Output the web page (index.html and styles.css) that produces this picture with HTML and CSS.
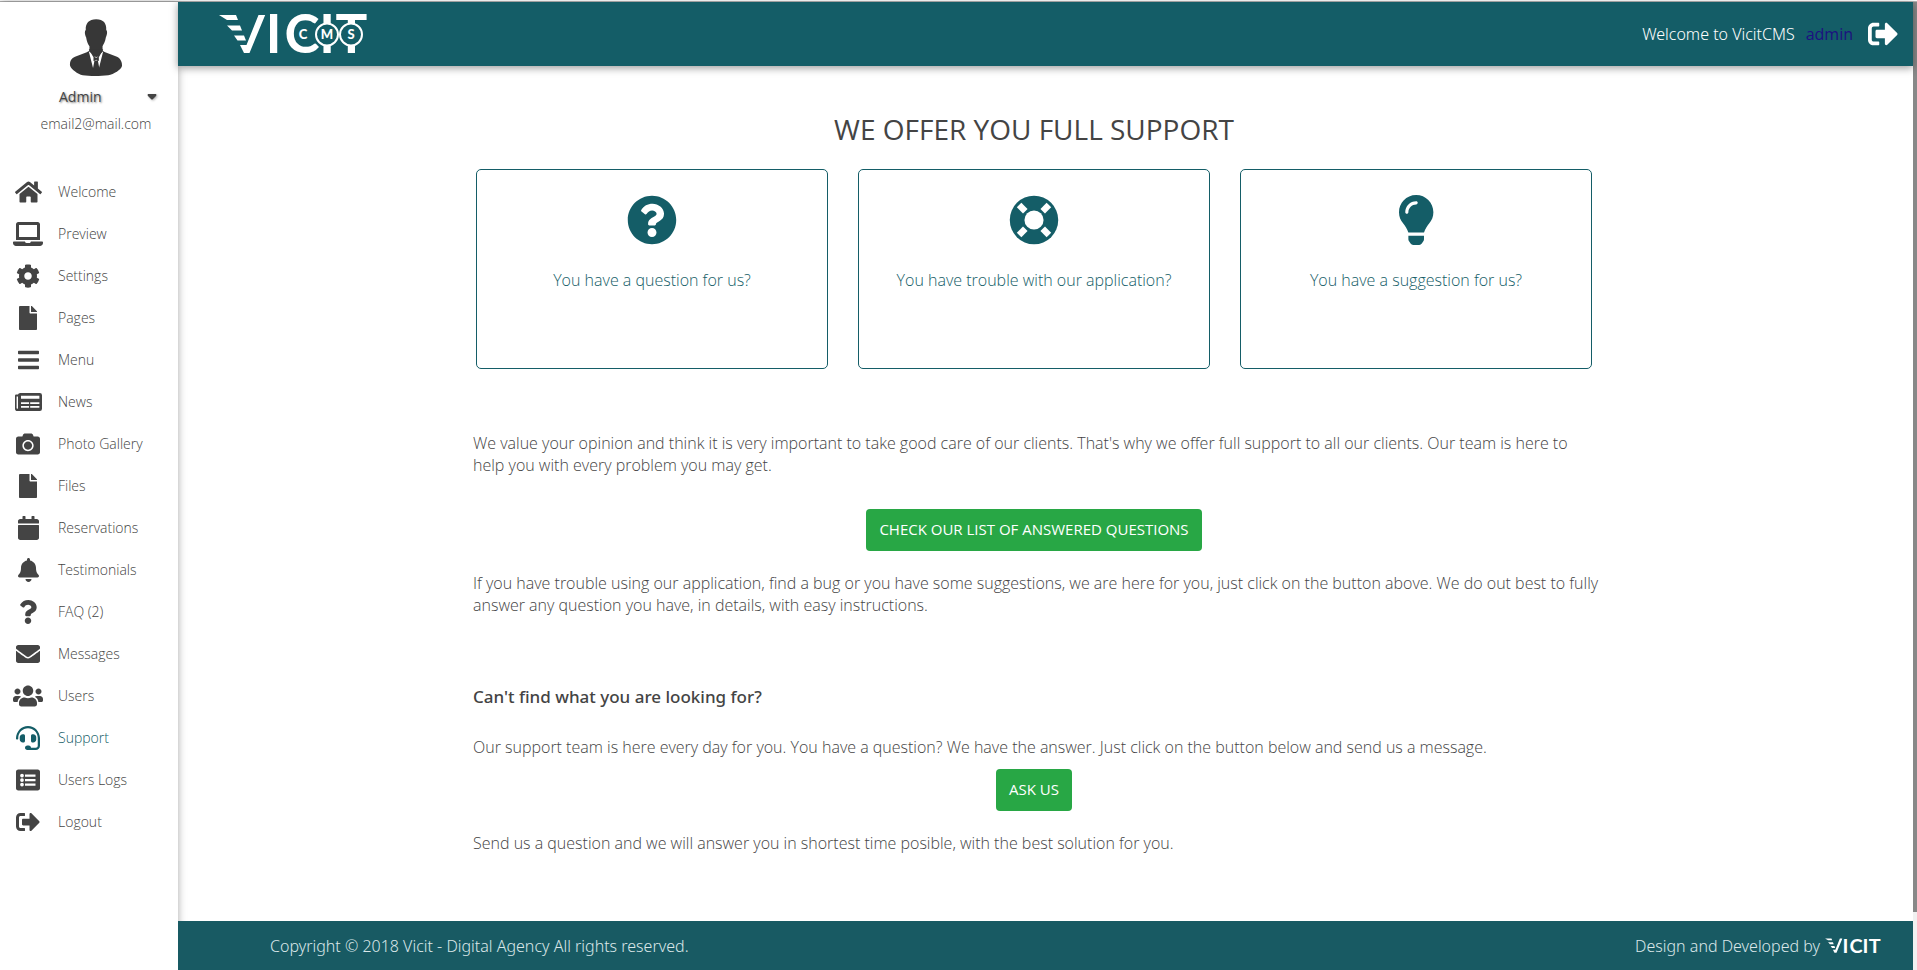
FILE: index.html
```html
<!DOCTYPE html>
<html lang="en">
<head>
<meta charset="utf-8">
<meta name="viewport" content="width=device-width, initial-scale=1">
<title>VicitCMS - Support</title>
<link rel="stylesheet" href="styles.css">
</head>
<body>
<svg class="defs" aria-hidden="true">
  <symbol id="logout" viewBox="0 0 512 512"><path d="M497 273L329 441c-15 15-41 4.500-41-17v-96H152c-13.300 0-24-10.700-24-24v-96c0-13.300 10.700-24 24-24h136V88c0-21.400 25.900-32 41-17l168 168c9.300 9.400 9.300 24.600 0 34zM192 436v-40c0-6.600-5.400-12-12-12H96c-17.700 0-32-14.300-32-32V160c0-17.700 14.300-32 32-32h84c6.600 0 12-5.400 12-12V76c0-6.600-5.400-12-12-12H96c-53 0-96 43-96 96v192c0 53 43 96 96 96h84c6.600 0 12-5.400 12-12z"/></symbol>
  <symbol id="file" viewBox="0 0 384 512"><path d="M224 136V0H24C10.700 0 0 10.700 0 24v464c0 13.300 10.700 24 24 24h336c13.300 0 24-10.700 24-24V160H248c-13.200 0-24-10.800-24-24zm160-14.100v6.100H256V0h6.100c6.400 0 12.500 2.500 17 7l97.900 98c4.500 4.500 7 10.600 7 16.900z"/></symbol>
  <symbol id="wing" viewBox="219 15 47 40"><path d="M219 16h17l2 5h-11zM227 26.500h13l2 5h-10zM234 36.500h10l2 5h-8.500zM258.500 16h6.700L249.500 54h-5.500l-4-8h6.500z"/></symbol>
</svg>
<div class="app">
  <aside class="sidebar">
    <div class="profile">
      <svg class="avatar" viewBox="0 0 155 169" role="img" aria-label="Profile picture"><path fill="#373737" d="M78 0c22 0 31 12 30 32 4 3 3 13-1 22-2 14-8 22-10 27v10c0 3 3 5 8 8l35 13c12 6 16 18 15 28-3 11-24 25-41 27-24 3-56 3-76 0-15-3-35-18-38-29-1-12 3-21 15-26l35-13c6-3 8-5 8-9V81c-4-6-8-13-10-27-4-9-5-19-1-22C46 12 56 0 78 0z"/><path fill="#fff" d="M56 96l13 51h17l13-51-20 17z"/><path fill="#373737" d="M56 90h43l-12 22h-18zM70 111l8 4 8-4v14l-8-4-8 4zM73 123h10l5 26H68z"/></svg>
      <button class="account" type="button"><span>Admin</span><svg class="caret" viewBox="0 0 10 6" aria-hidden="true"><path d="M1 0h8q1 1 0 2L6 5q-1 1-2 0L1 2Q0 1 1 0z"/></svg></button>
      <p class="email">email2@mail.com</p>
    </div>
    <nav>
      <ul class="menu">
        <li><a href="#"><span class="ico"><svg viewBox="0 0 576 512"><path d="M280.370 148.260L96 300.110V464a16 16 0 0 0 16 16l112.060-.29a16 16 0 0 0 15.920-16V368a16 16 0 0 1 16-16h64a16 16 0 0 1 16 16v95.640a16 16 0 0 0 16 16.050L464 480a16 16 0 0 0 16-16V300L295.670 148.260a12.190 12.190 0 0 0-15.300 0zM571.600 251.470L488 182.560V44.050a12 12 0 0 0-12-12h-56a12 12 0 0 0-12 12v72.610L318.470 43a48 48 0 0 0-61 0L4.340 251.470a12 12 0 0 0-1.600 16.900l25.500 31A12 12 0 0 0 45.150 301l235.220-193.740a12.190 12.190 0 0 1 15.300 0L530.900 301a12 12 0 0 0 16.900-1.600l25.500-31a12 12 0 0 0-1.700-16.930z"/></svg></span>Welcome</a></li>
        <li><a href="#"><span class="ico"><svg viewBox="0 0 640 512"><path d="M624 416H381.540c-.74 19.810-14.710 32-32.740 32H288c-18.690 0-33.020-17.470-32.770-32H16c-8.800 0-16 7.200-16 16v16c0 35.200 28.800 64 64 64h512c35.200 0 64-28.800 64-64v-16c0-8.800-7.200-16-16-16zM576 48c0-26.400-21.600-48-48-48H112C85.600 0 64 21.600 64 48v336h512V48zm-64 272H128V64h384v256z"/></svg></span>Preview</a></li>
        <li><a href="#"><span class="ico"><svg viewBox="0 0 512 512"><path d="M487.400 315.700l-42.600-24.600c4.300-23.200 4.300-47 0-70.200l42.600-24.600c4.900-2.800 7.100-8.600 5.500-14-11.100-35.600-30-67.800-54.700-94.600-3.800-4.100-10-5.100-14.800-2.300L380.800 110c-17.900-15.400-38.500-27.300-60.800-35.100V25.800c0-5.600-3.900-10.500-9.400-11.700-36.700-8.200-74.300-7.800-109.200 0-5.500 1.200-9.400 6.100-9.400 11.700V75c-22.200 7.900-42.800 19.800-60.800 35.100L88.700 85.500c-4.900-2.800-11-1.900-14.800 2.300-24.700 26.700-43.600 58.900-54.700 94.600-1.700 5.400.6 11.200 5.500 14L67.300 221c-4.300 23.200-4.300 47 0 70.200l-42.600 24.600c-4.900 2.800-7.100 8.600-5.500 14 11.100 35.600 30 67.800 54.700 94.600 3.800 4.100 10 5.100 14.800 2.300l42.600-24.600c17.900 15.400 38.500 27.300 60.800 35.100v49.200c0 5.600 3.900 10.500 9.400 11.700 36.700 8.200 74.300 7.800 109.200 0 5.500-1.200 9.400-6.100 9.400-11.700v-49.200c22.200-7.900 42.800-19.800 60.800-35.100l42.600 24.600c4.900 2.800 11 1.900 14.800-2.300 24.700-26.700 43.600-58.900 54.700-94.600 1.500-5.500-.7-11.300-5.600-14.100zM256 336c-44.100 0-80-35.900-80-80s35.900-80 80-80 80 35.900 80 80-35.900 80-80 80z"/></svg></span>Settings</a></li>
        <li><a href="#"><span class="ico"><svg viewBox="0 0 384 512"><use href="#file"/></svg></span>Pages</a></li>
        <li><a href="#"><span class="ico"><svg viewBox="0 0 448 512"><path d="M16 132h416c8.837 0 16-7.163 16-16V76c0-8.837-7.163-16-16-16H16C7.163 60 0 67.163 0 76v40c0 8.837 7.163 16 16 16zm0 160h416c8.837 0 16-7.163 16-16v-40c0-8.837-7.163-16-16-16H16c-8.837 0-16 7.163-16 16v40c0 8.837 7.163 16 16 16zm0 160h416c8.837 0 16-7.163 16-16v-40c0-8.837-7.163-16-16-16H16c-8.837 0-16 7.163-16 16v40c0 8.837 7.163 16 16 16z"/></svg></span>Menu</a></li>
        <li><a href="#"><span class="ico"><svg viewBox="0 0 576 512"><path fill-rule="evenodd" d="M112 64h416a48 48 0 0 1 48 48v288a48 48 0 0 1-48 48H56a56 56 0 0 1-56-56V120a24 24 0 0 1 24-24h40q6-32 48-32zM34 140v250q4 12 22 10 8-2 8-10V140zM128 120v68h392v-68zM128 262v36h172v-36zM324 262v36h196v-36zM128 342v36h172v-36zM324 342v36h196v-36z"/></svg></span>News</a></li>
        <li><a href="#"><span class="ico"><svg viewBox="0 0 512 512"><path d="M512 144v288c0 26.500-21.500 48-48 48H48c-26.500 0-48-21.500-48-48V144c0-26.500 21.500-48 48-48h88l12.300-32.900c7-18.700 24.900-31.100 44.900-31.100h125.500c20 0 37.900 12.400 44.900 31.100L376 96h88c26.500 0 48 21.500 48 48zM376 288c0-66.200-53.800-120-120-120s-120 53.800-120 120 53.800 120 120 120 120-53.800 120-120zm-32 0c0 48.500-39.500 88-88 88s-88-39.500-88-88 39.500-88 88-88 88 39.500 88 88z"/></svg></span>Photo Gallery</a></li>
        <li><a href="#"><span class="ico"><svg viewBox="0 0 384 512"><use href="#file"/></svg></span>Files</a></li>
        <li><a href="#"><span class="ico"><svg viewBox="0 0 448 512"><path d="M12 192h424c6.600 0 12 5.400 12 12v260c0 26.500-21.500 48-48 48H48c-26.500 0-48-21.500-48-48V204c0-6.600 5.400-12 12-12zm436-44v-36c0-26.500-21.500-48-48-48h-48V12c0-6.600-5.400-12-12-12h-40c-6.600 0-12 5.400-12 12v52H160V12c0-6.600-5.400-12-12-12h-40c-6.600 0-12 5.400-12 12v52H48C21.500 64 0 85.500 0 112v36c0 6.600 5.400 12 12 12h424c6.600 0 12-5.400 12-12z"/></svg></span>Reservations</a></li>
        <li><a href="#"><span class="ico"><svg viewBox="0 0 448 512"><path d="M224 512c35.320 0 63.970-28.650 63.970-64H160.030c0 35.350 28.650 64 63.970 64zm215.390-149.710c-19.320-20.760-55.470-51.990-55.470-154.290 0-77.700-54.480-139.900-127.940-155.160V32c0-17.670-14.320-32-31.980-32s-31.980 14.330-31.980 32v20.840C118.560 68.100 64.080 130.300 64.080 208c0 102.300-36.150 133.530-55.470 154.290-6 6.450-8.660 14.160-8.610 21.710.11 16.400 12.980 32 32.100 32h383.800c19.120 0 32-15.600 32.100-32 .05-7.550-2.610-15.270-8.610-21.710z"/></svg></span>Testimonials</a></li>
        <li><a href="#"><span class="ico"><svg viewBox="0 0 384 512"><path d="M202.021 0C122.202 0 70.503 32.703 29.914 91.026c-7.363 10.580-5.093 25.086 5.178 32.874l43.138 32.709c10.373 7.865 25.132 6.026 33.253-4.148 25.049-31.381 43.630-49.449 82.757-49.449 30.764 0 68.816 19.799 68.816 49.631 0 22.552-18.617 34.134-48.993 51.164-35.423 19.860-82.299 44.576-82.299 106.405V320c0 13.255 10.745 24 24 24h72.471c13.255 0 24-10.745 24-24v-5.773c0-42.860 125.268-44.645 125.268-160.627C377.504 66.256 286.902 0 202.021 0zM192 373.459c-38.196 0-69.271 31.075-69.271 69.271 0 38.195 31.075 69.270 69.271 69.270s69.271-31.075 69.271-69.271-31.075-69.270-69.271-69.270z"/></svg></span>FAQ (2)</a></li>
        <li><a href="#"><span class="ico"><svg viewBox="0 0 512 512"><path d="M502.300 190.800c3.900-3.100 9.700-.2 9.700 4.700V400c0 26.500-21.500 48-48 48H48c-26.500 0-48-21.500-48-48V195.600c0-5 5.700-7.800 9.700-4.700 22.400 17.400 52.100 39.500 154.100 113.600 21.100 15.400 56.700 47.800 92.200 47.600 35.700.3 72-32.800 92.300-47.600 102-74.100 131.600-96.300 154-113.700zM256 320c23.200.4 56.600-29.200 73.400-41.400 132.700-96.300 142.800-104.700 173.400-128.700 5.800-4.500 9.200-11.500 9.200-18.900v-19c0-26.500-21.500-48-48-48H48c-26.500 0-48 21.500-48 48v19c0 7.400 3.400 14.300 9.200 18.900 30.600 23.900 40.700 32.400 173.400 128.700 16.800 12.200 50.200 41.800 73.400 41.400z"/></svg></span>Messages</a></li>
        <li><a href="#"><span class="ico"><svg viewBox="0 0 640 512"><path d="M96 224c35.300 0 64-28.700 64-64s-28.700-64-64-64-64 28.700-64 64 28.700 64 64 64zm448 0c35.300 0 64-28.700 64-64s-28.700-64-64-64-64 28.700-64 64 28.700 64 64 64zm32 32h-64c-17.600 0-33.500 7.100-45.100 18.600 40.300 22.100 68.900 62 75.100 109.400h66c17.700 0 32-14.300 32-32v-32c0-35.300-28.700-64-64-64zm-256 0c61.900 0 112-50.100 112-112S381.900 32 320 32 208 82.100 208 144s50.100 112 112 112zm76.800 32h-8.300c-20.800 10-43.900 16-68.500 16s-47.600-6-68.500-16h-8.300C179.600 288 128 339.600 128 403.200V432c0 26.500 21.500 48 48 48h288c26.500 0 48-21.500 48-48v-28.800c0-63.600-51.600-115.200-115.200-115.200zm-223.700-13.400C161.500 263.100 145.600 256 128 256H64c-35.300 0-64 28.700-64 64v32c0 17.700 14.300 32 32 32h65.900c6.300-47.400 34.900-87.300 75.200-109.400z"/></svg></span>Users</a></li>
        <li><a class="active" href="#" aria-current="page"><span class="ico"><svg viewBox="0 0 512 512"><path d="M192 208c0-17.670-14.330-32-32-32h-16c-35.350 0-64 28.650-64 64v48c0 35.350 28.650 64 64 64h16c17.670 0 32-14.330 32-32V208zm176 144c35.350 0 64-28.650 64-64v-48c0-35.350-28.650-64-64-64h-16c-17.670 0-32 14.330-32 32v112c0 17.670 14.330 32 32 32h16zM256 0C113.180 0 4.580 118.830 0 256v16c0 8.840 7.160 16 16 16h16c8.840 0 16-7.160 16-16v-16c0-114.690 93.310-208 208-208s208 93.310 208 208h-.12c.08 2.430.12 165.720.12 165.720 0 23.350-18.930 42.280-42.280 42.280H320c0-26.510-21.490-48-48-48h-32c-26.510 0-48 21.490-48 48s21.490 48 48 48h181.720c49.860 0 90.280-40.420 90.280-90.280V256C507.420 118.830 398.820 0 256 0z"/></svg></span>Support</a></li>
        <li><a href="#"><span class="ico"><svg viewBox="0 0 512 512"><path fill-rule="evenodd" d="M464 480H48c-26.510 0-48-21.490-48-48V80c0-26.510 21.490-48 48-48h416c26.510 0 48 21.490 48 48v352c0 26.510-21.490 48-48 48zM128 120a40 40 0 1 0 0 80 40 40 0 0 0 0-80zm0 96a40 40 0 1 0 0 80 40 40 0 0 0 0-80zm0 96a40 40 0 1 0 0 80 40 40 0 0 0 0-80zM192 136v48h224v-48zM192 232v48h224v-48zM192 328v48h224v-48z"/></svg></span>Users Logs</a></li>
        <li><a href="#"><span class="ico"><svg viewBox="0 0 512 512"><use href="#logout"/></svg></span>Logout</a></li>
      </ul>
    </nav>
  </aside>

  <div class="page">
    <header class="topbar">
      <a class="brand" href="#" aria-label="Vicit CMS">
        <svg class="logo" viewBox="219 15 149 40">
          <use href="#wing" x="219" y="15" width="47" height="40"/>
          <text class="logo-big" x="273.500 302 327 351.500" y="54">ICIT</text>
          <circle class="ring" cx="327" cy="35.500" r="11"/><circle class="ring" cx="351" cy="35.500" r="11"/>
          <text class="logo-small" x="303 327 351" y="40">CMS</text>
        </svg>
      </a>
      <div class="welcome">
        <span>Welcome to VicitCMS</span>
        <a class="user" href="#">admin</a>
        <a class="exit" href="#" aria-label="Logout"><svg viewBox="0 0 512 512"><use href="#logout"/></svg></a>
      </div>
    </header>

    <main class="content">
      <h1>WE OFFER YOU FULL SUPPORT</h1>
      <div class="cards">
        <a class="card" href="#"><svg viewBox="0 0 512 512"><path d="M504 256c0 136.997-111.043 248-248 248S8 392.997 8 256C8 119.083 119.043 8 256 8s248 111.083 248 248zM262.655 90c-54.497 0-89.255 22.957-116.549 63.758-3.536 5.286-2.353 12.415 2.715 16.258l34.699 26.310c5.205 3.947 12.621 3.008 16.665-2.122 17.864-22.658 30.113-35.797 57.303-35.797 20.429 0 45.698 13.148 45.698 32.958 0 14.976-12.363 22.667-32.534 33.976C247.128 238.528 216 254.941 216 296v4c0 6.627 5.373 12 12 12h56c6.627 0 12-5.373 12-12v-1.333c0-28.462 83.186-29.647 83.186-106.667 0-58.002-60.165-102-116.531-102zM256 338c-25.365 0-46 20.635-46 46 0 25.364 20.635 46 46 46s46-20.636 46-46c0-25.365-20.635-46-46-46z"/></svg><span>You have a question for us?</span></a>
        <a class="card" href="#"><svg viewBox="-256 -256 512 512"><circle r="248"/><g fill="#fff"><circle r="98"/><path transform="rotate(45)" d="M126-33h90v66h-90z"/><path transform="rotate(135)" d="M126-33h90v66h-90z"/><path transform="rotate(225)" d="M126-33h90v66h-90z"/><path transform="rotate(315)" d="M126-33h90v66h-90z"/></g></svg><span>You have trouble with our application?</span></a>
        <a class="card" href="#"><svg viewBox="0 0 352 512"><path d="M96.060 454.350c.01 6.290 1.870 12.450 5.360 17.690l17.090 25.690a31.990 31.990 0 0 0 26.640 14.280h61.710a31.990 31.990 0 0 0 26.640-14.280l17.090-25.690a31.989 31.989 0 0 0 5.360-17.690l.04-38.350H96.010l.05 38.350zM0 176c0 44.370 16.450 84.850 43.560 115.780 16.520 18.850 42.360 58.230 52.210 91.450.04.26.07.52.11.78h160.240c.04-.26.07-.51.11-.78 9.850-33.220 35.690-72.600 52.210-91.450C335.550 260.850 352 220.370 352 176 352 78.610 272.910-.3 175.450 0 73.440.31 0 82.970 0 176zm176-80c-44.110 0-80 35.890-80 80 0 8.840-7.160 16-16 16s-16-7.160-16-16c0-61.760 50.240-112 112-112 8.840 0 16 7.160 16 16s-7.160 16-16 16z"/></svg><span>You have a suggestion for us?</span></a>
      </div>
      <p class="intro">We value your opinion and think it is very important to take good care of our clients. That's why we offer full support to all our clients. Our team is here to help you with every problem you may get.</p>
      <button class="btn" type="button">CHECK OUR LIST OF ANSWERED QUESTIONS</button>
      <p class="note">If you have trouble using our application, find a bug or you have some suggestions, we are here for you, just click on the button above. We do out best to fully answer any question you have, in details, with easy instructions.</p>
      <h2>Can't find what you are looking for?</h2>
      <p>Our support team is here every day for you. You have a question? We have the answer. Just click on the button below and send us a message.</p>
      <button class="btn ask" type="button">ASK US</button>
      <p class="note">Send us a question and we will answer you in shortest time posible, with the best solution for you.</p>
    </main>

    <footer class="footer">
      <span>Copyright © 2018 Vicit - Digital Agency All rights reserved.</span>
      <span class="credit">Design and Developed by
        <svg class="logo-mini" viewBox="219 15 149 40" role="img" aria-label="Vicit"><use href="#wing" x="219" y="15" width="47" height="40"/><text class="logo-big" x="273.500 302 327 351.500" y="54">ICIT</text></svg>
      </span>
    </footer>
  </div>
  <div class="scroll" aria-hidden="true"><div class="thumb"></div></div>
</div>
</body>
</html>
```

FILE: styles.css
```css
:root {
  --teal: #145d67;
  --ink: #444;
  --green: #28a745;
}

* { box-sizing: border-box; }

body {
  margin: 0;
  padding-top: 1px;
  background: #fff;
  color: var(--ink);
  font: 300 16px/22px "Open Sans", "Noto Sans", sans-serif;
}

a { color: inherit; text-decoration: none; }
button { font: inherit; color: inherit; border: 0; cursor: pointer; }
p, h1, h2, ul { margin: 0; padding: 0; }
svg { display: block; overflow: visible; fill: currentColor; }
.defs { position: absolute; width: 0; height: 0; }

.app {
  display: grid;
  grid-template-columns: 178px 1fr 4px;
  min-height: calc(100vh - 1px);
  border-top: 1px solid #b4b4b4;
}

/* Sidebar */
.sidebar {
  background: #fff;
  box-shadow: 0 0 8px rgba(0, 0, 0, 0.35);
  font-size: 14px;
}

.profile {
  display: flex;
  flex-direction: column;
  align-items: center;
  padding: 17px 0 36px 14px;
}

.avatar { width: 52px; height: 57px; }

.account {
  display: flex;
  align-items: center;
  justify-content: space-between;
  width: 100%;
  margin-top: 10px;
  padding: 0 21px 0 45px;
  background: none;
  font-weight: 400;
  text-shadow: 1px 1px 2px rgba(0, 0, 0, 0.5);
}

.caret { width: 10px; height: 6px; filter: drop-shadow(1px 1px 1px rgba(0, 0, 0, 0.3)); }
.email { margin-top: 5px; }

.menu { list-style: none; }

.menu a {
  display: flex;
  align-items: center;
  gap: 15px;
  height: 42px;
  padding-left: 13px;
}

.menu .active { color: var(--teal); }
.ico { display: flex; justify-content: center; width: 30px; }
.ico svg { height: 24px; }

/* Page */
.page { display: flex; flex-direction: column; min-width: 0; }

.topbar {
  position: relative;
  display: flex;
  align-items: center;
  justify-content: space-between;
  height: 64px;
  padding: 0 15px 0 41px;
  background: var(--teal);
  box-shadow: 0 2px 8px rgba(0, 0, 0, 0.4);
  color: #fff;
}

.logo { width: 149px; height: 40px; }
.logo-big { font: 700 53px "Lato", sans-serif; text-anchor: middle; }
.logo-small { font: 900 13px "Lato", sans-serif; text-anchor: middle; }
.ring { fill: var(--teal); stroke: #fff; stroke-width: 2; }

.welcome { display: flex; align-items: center; font-weight: 400; }
.welcome span { font-family: "Noto Sans", sans-serif; font-weight: 300; }
.user { margin: 0 15px 0 11px; color: #1c1180; }
.exit svg { width: 30px; height: 30px; }

.content {
  display: flex;
  flex: 1;
  flex-direction: column;
  width: 100%;
  max-width: 1151px;
  margin: 0 auto;
  padding: 43px 23px 32px 0;
}

.content p, h2 { padding-left: 3px; }
.content p { margin-right: -3px; }

h1 {
  font-size: 28px;
  font-weight: 400;
  line-height: 40px;
  text-align: center;
}

.cards {
  display: grid;
  grid-template-columns: repeat(3, 1fr);
  gap: 30px;
  margin-top: 20px;
  padding: 0 6px;
}

.card {
  display: flex;
  flex-direction: column;
  align-items: center;
  height: 200px;
  padding-top: 25px;
  border: 1px solid var(--teal);
  border-radius: 5px;
  color: var(--teal);
}

.card svg { height: 50px; }
.card span { margin-top: 24px; }

.intro { margin-top: 63px; }

.btn {
  align-self: center;
  height: 42px;
  margin-top: 33px;
  padding: 0 13px 2px;
  border-radius: 4px;
  background: var(--green);
  color: #fff;
  font-weight: 400;
  font-size: 15px;
}

.note { margin-top: 21px; }

h2 {
  margin-top: 69px;
  margin-bottom: 27px;
  font: 500 17px/24px "Noto Sans", sans-serif;
}

.ask { margin-top: 11px; }

.footer {
  display: flex;
  align-items: center;
  justify-content: space-between;
  height: 49px;
  padding: 0 32px 0 92px;
  background: #185a63;
  color: #dbe7e9;
  font-family: "Noto Sans", sans-serif;
}

.credit { display: flex; align-items: center; gap: 5px; }
.logo-mini { width: 56px; height: 15px; color: #fff; }

/* Scroll track */
.scroll { background: #f1f1f1; }
.thumb { height: 94%; background: #888; }
```
